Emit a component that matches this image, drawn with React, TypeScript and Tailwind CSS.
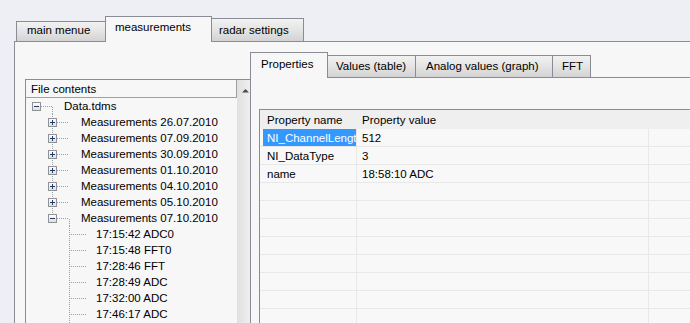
import React from "react";

type Row = { level: 0 | 1 | 2; text: string; box?: "plus" | "minus"; last?: boolean };

const rows: Row[] = [
  { level: 0, text: "Data.tdms", box: "minus" },
  { level: 1, text: "Measurements 26.07.2010", box: "plus" },
  { level: 1, text: "Measurements 07.09.2010", box: "plus" },
  { level: 1, text: "Measurements 30.09.2010", box: "plus" },
  { level: 1, text: "Measurements 01.10.2010", box: "plus" },
  { level: 1, text: "Measurements 04.10.2010", box: "plus" },
  { level: 1, text: "Measurements 05.10.2010", box: "plus" },
  { level: 1, text: "Measurements 07.10.2010", box: "minus", last: true },
  { level: 2, text: "17:15:42 ADC0" },
  { level: 2, text: "17:15:48 FFT0" },
  { level: 2, text: "17:28:46 FFT" },
  { level: 2, text: "17:28:49 ADC" },
  { level: 2, text: "17:32:00 ADC" },
  { level: 2, text: "17:46:17 ADC" },
];

const DOT = "#a0a0a0";

function Box({ cx, kind }: { cx: number; kind: "plus" | "minus" }) {
  return (
    <g shapeRendering="crispEdges">
      <rect x={cx - 4 + 0.5} y={4.5} width={8} height={8} fill="url(#bx)" stroke="#919191" />
      <line x1={cx - 2} y1={8.5} x2={cx + 3} y2={8.5} stroke="#1f3a6b" />
      {kind === "plus" && <line x1={cx + 0.5} y1={6} x2={cx + 0.5} y2={11} stroke="#1f3a6b" />}
    </g>
  );
}

function Connector({ row, isLastRow }: { row: Row; isLastRow: boolean }) {
  const w = row.level === 0 ? 38 : row.level === 1 ? 55 : 70;
  return (
    <svg width={w} height={isLastRow ? 17 : 16} className="shrink-0 self-start">
      <defs>
        <linearGradient id="bx" x1="0" y1="0" x2="0" y2="1">
          <stop offset="0" stopColor="#ffffff" />
          <stop offset="1" stopColor="#dcdcdc" />
        </linearGradient>
      </defs>
      <g stroke={DOT} strokeDasharray="1 1" shapeRendering="crispEdges">
        {row.level === 0 && (
          <>
            <line x1={15} y1={8.5} x2={27} y2={8.5} />
            <line x1={26.5} y1={9} x2={26.5} y2={16} />
          </>
        )}
        {row.level === 1 && (
          <>
            <line x1={26.5} y1={0} x2={26.5} y2={row.last ? 8 : 16} />
            <line x1={31} y1={8.5} x2={43} y2={8.5} />
            {row.last && <line x1={43.5} y1={9} x2={43.5} y2={16} />}
          </>
        )}
        {row.level === 2 && (
          <>
            <line x1={43.5} y1={0} x2={43.5} y2={isLastRow ? 17 : 16} />
            <line x1={45} y1={8.5} x2={60} y2={8.5} />
          </>
        )}
      </g>
      {row.box && <Box cx={row.level === 0 ? 10 : 26} kind={row.box} />}
    </svg>
  );
}

const inactiveBg = "bg-linear-to-b from-[#f2f2f2] via-[#e4e4e4] to-[#d3d3d3]";

export default function App() {
  const tableRows = [
    { n: "NI_ChannelLength", v: "512", sel: true },
    { n: "NI_DataType", v: "3" },
    { n: "name", v: "18:58:10 ADC" },
    ...Array.from({ length: 9 }, () => ({ n: "", v: "" })),
  ];
  return (
    <div className="w-[690px] h-[323px] overflow-hidden bg-[#eeeef5] font-['Liberation_Sans',Arial,sans-serif] text-[11.5px] leading-[14px] text-black flex flex-col">
      {/* top tabs */}
      <div className="flex items-end h-[41px] pl-[16px] shrink-0">
        <div className={`box-border w-[90px] h-[20px] border border-b-0 border-[#898c95] pl-[10px] pt-[1px] whitespace-nowrap ${inactiveBg}`}>
          main menue
        </div>
        <div className="relative z-10 box-border -ml-px -mb-px w-[107px] h-[26px] border border-b-0 border-[#898c95] bg-[#f7f7f7] pl-[9px] pt-[3px] whitespace-nowrap">
          measurements
        </div>
        <div className={`box-border -ml-px w-[93px] h-[23px] border border-b-0 border-[#898c95] pl-[7px] pt-[4px] whitespace-nowrap ${inactiveBg}`}>
          radar settings
        </div>
      </div>

      {/* outer panel */}
      <div className="ml-[14px] flex-1 min-h-0 border-l border-t border-[#898c95] bg-[#f7f7f7] flex">
        {/* left column: tree */}
        <div className="w-[235px] shrink-0 pt-[37px] pl-[10px] flex flex-col">
          <div className="flex-1 flex border-l border-t border-[#898c95] overflow-hidden">
            <div className="w-[211px] shrink-0 flex flex-col">
              <div className="h-[18px] shrink-0 border-b border-r border-[#a0a0a0] pl-[5px] flex items-center whitespace-nowrap">
                File contents
              </div>
              {rows.map((r, i) => (
                <div key={i} className="h-[16px] shrink-0 flex items-center whitespace-nowrap">
                  <Connector row={r} isLastRow={i === rows.length - 1} />
                  <span>{r.text}</span>
                </div>
              ))}
            </div>
            <div className="w-[13px] shrink-0 bg-linear-to-r from-[#e0e0e0] to-[#efefef] pt-[9px]">
              <svg width={13} height={6}>
                <polygon points="5,3.5 12,3.5 8.5,0" fill="#4a4a4a" />
              </svg>
            </div>
          </div>
        </div>

        {/* right column */}
        <div className="flex-1 min-w-0 pt-[10px] flex flex-col">
          <div className="flex items-end h-[25px] shrink-0">
            <div className="relative z-10 box-border -mb-px w-[78px] h-[26px] border border-b-0 border-[#898c95] bg-[#f7f7f7] pl-[10px] pt-[4px] whitespace-nowrap">
              Properties
            </div>
            <div className={`box-border -ml-px w-[89px] h-[22px] border border-b-0 border-[#898c95] pl-[8px] pt-[3px] whitespace-nowrap ${inactiveBg}`}>
              Values (table)
            </div>
            <div className={`box-border -ml-px w-[138px] h-[22px] border border-b-0 border-[#898c95] pl-[10px] pt-[3px] whitespace-nowrap ${inactiveBg}`}>
              Analog values (graph)
            </div>
            <div className={`box-border -ml-px w-[39px] h-[22px] border border-b-0 border-[#898c95] pl-[9px] pt-[3px] whitespace-nowrap ${inactiveBg}`}>
              FFT
            </div>
          </div>

          <div className="flex-1 min-h-0 border-l border-t border-[#898c95] bg-[#f7f7f7] pl-[8px] pt-[31px] flex flex-col">
            <div className="flex-1 border-l border-t border-[#898c95] bg-[#f8f8f8] overflow-hidden">
              <div className="h-[19px] bg-[#efefef] flex items-center whitespace-nowrap">
                <div className="w-[97px] shrink-0 pl-[7px]">Property name</div>
                <div className="pl-[5px]">Property value</div>
              </div>
              {tableRows.map((r, i) => (
                <div key={i} className="h-[18px] border-b border-[#e8e8e8] flex whitespace-nowrap">
                  <div className="w-[97px] shrink-0 border-r border-[#e8e8e8] pl-[3px] flex">
                    {r.sel ? (
                      <div className="w-full h-full bg-[#3399ff] text-white pl-[4px] overflow-hidden flex items-center">
                        {r.n}
                      </div>
                    ) : (
                      <div className="pl-[4px] flex items-center">{r.n}</div>
                    )}
                  </div>
                  <div className="w-[292px] shrink-0 border-r border-[#e8e8e8] pl-[5px] flex items-center">{r.v}</div>
                  <div className="flex-1" />
                </div>
              ))}
            </div>
          </div>
        </div>
      </div>
    </div>
  );
}
